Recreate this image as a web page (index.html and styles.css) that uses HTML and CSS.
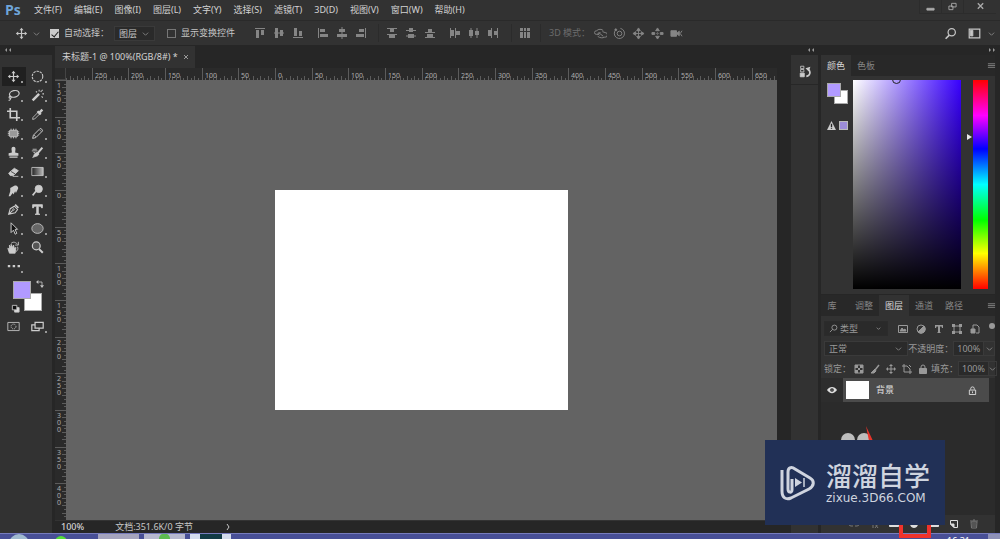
FILE: index.html
```html
<!DOCTYPE html>
<html lang="zh-CN">
<head>
<meta charset="utf-8">
<title>未标题-1</title>
<link rel="stylesheet" href="styles.css">
</head>
<body>
<div class="app">
  <header class="menubar">
    <span class="brand">Ps</span>
    <nav class="menus">
      <button>文件(F)</button><button>编辑(E)</button><button>图像(I)</button><button>图层(L)</button><button>文字(Y)</button><button>选择(S)</button><button>滤镜(T)</button><button>3D(D)</button><button>视图(V)</button><button>窗口(W)</button><button>帮助(H)</button>
    </nav>
    <div class="window-buttons">
      <button aria-label="最小化"><svg viewBox="0 0 10 10"><path d="M1 7h8v2H1z" fill="currentColor"/></svg></button>
      <button aria-label="还原"><svg viewBox="0 0 10 10"><path d="M4 1.5h5v4H4zM1 4.5h4.5v4H1z"/></svg></button>
      <button aria-label="关闭"><svg viewBox="0 0 10 10"><path d="M2 1.5l6 6M8 1.5l-6 6" stroke-width="1.5"/></svg></button>
    </div>
  </header>

  <div class="options">
    <button class="current-tool" aria-label="移动工具"><svg class="icon" viewBox="0 0 16 16"><path d="M8 3v10M3 8h10" stroke-width="1.5"/><path d="M8 1L5.500 4h5zM8 15l-2.500-3h5zM1 8l3-2.500v5zM15 8l-3-2.500v5z" fill="currentColor" stroke="none"/></svg><svg class="chev" viewBox="0 0 8 8"><path d="M1 3l3 3 3-3"/></svg></button>
    <label class="check"><input type="checkbox" checked>自动选择：</label>
    <label class="drop target"><select aria-label="自动选择目标"><option>图层</option></select><svg class="chev" viewBox="0 0 8 8"><path d="M1 3l3 3 3-3"/></svg></label>
    <label class="check second"><input type="checkbox">显示变换控件</label>
    <div class="align-group first">
      <button aria-label="顶对齐"><svg viewBox="0 0 12 12"><path d="M1 1h10v1H1zM2 3h3v8H2zM7 3h3v5H7z"/></svg></button>
      <button aria-label="垂直居中对齐"><svg viewBox="0 0 12 12"><path d="M2 1h3v10H2zM7 3h3v6H7zM1 5.500h10v1H1z"/></svg></button>
      <button aria-label="底对齐"><svg viewBox="0 0 12 12"><path d="M1 10h10v1H1zM2 1h3v8H2zM7 4h3v5H7z"/></svg></button>
    </div>
    <div class="align-group">
      <button aria-label="左对齐"><svg viewBox="0 0 12 12"><path d="M1 1h1v10H1zM3 2h5v3H3zM3 7h8v3H3z"/></svg></button>
      <button aria-label="水平居中对齐"><svg viewBox="0 0 12 12"><path d="M5.500 0h1v12h-1zM3 2h6v3H3zM1 7h10v3H1z"/></svg></button>
      <button aria-label="右对齐"><svg viewBox="0 0 12 12"><path d="M10 1h1v10h-1zM4 2h5v3H4zM1 7h8v3H1z"/></svg></button>
    </div>
    <div class="align-group ruled">
      <button aria-label="按顶分布"><svg viewBox="0 0 12 12"><path d="M1 1h10v1H1zM4 2h4v3H4zM1 7h10v1H1zM3 8h6v3H3z"/></svg></button>
      <button aria-label="垂直居中分布"><svg viewBox="0 0 12 12"><path d="M4 1h4v4H4zM1 3h10v1H1zM3 7h6v4H3zM1 8.500h10v1H1z"/></svg></button>
      <button aria-label="按底分布"><svg viewBox="0 0 12 12"><path d="M4 2h4v3H4zM1 5h10v1H1zM3 7h6v3H3zM1 10h10v1H1z"/></svg></button>
    </div>
    <div class="align-group">
      <button aria-label="按左分布"><svg viewBox="0 0 12 12"><path d="M1 1h1v10H1zM2 3h3v6H2zM6 1h1v10H6zM7 4h4v4H7z"/></svg></button>
      <button aria-label="水平居中分布"><svg viewBox="0 0 12 12"><path d="M1 3h4v6H1zM2.500 1h1v10h-1zM7 4h4v4H7zM8.500 1h1v10h-1z"/></svg></button>
      <button aria-label="按右分布"><svg viewBox="0 0 12 12"><path d="M4 1h1v10H4zM1 3h3v6H1zM10 1h1v10h-1zM7 4h3v4H7z"/></svg></button>
    </div>
    <div class="align-group ruled single">
      <button aria-label="自动对齐图层"><svg viewBox="0 0 12 12"><path d="M1 1h3v3H1zM5 1h2v3H5zM8 1h3v3H8zM1 5h3v6H1zM5 5h2v6H5zM8 5h3v6H8z"/></svg></button>
    </div>
    <div class="mode3d">
      <span class="mode-label">3D 模式：</span>
      <button aria-label="旋转 3D"><svg class="line" viewBox="0 0 14 14"><path d="M5 8H3a2.500 2 0 0 1 0-4c1-2 6-2 7 0M4 10c2 2 6 2 7 1h1a2 2 0 0 0 0-5L9 5M5 6l5 4M6 9L4 7l3-1"/></svg></button>
      <button aria-label="滚动 3D"><svg class="line" viewBox="0 0 14 14"><circle cx="7" cy="7" r="2.500"/><path d="M3 3a5.500 5.500 0 1 0 5-1.500"/><circle cx="3" cy="3" r="1" fill="currentColor"/></svg></button>
      <button aria-label="拖动 3D"><svg class="line" viewBox="0 0 14 14"><path d="M7 1l2 3H5zM7 13l2-3H5zM1 7l3-2v4zM13 7l-3-2v4z" fill="currentColor"/><path d="M7 3v8M3 7h8"/></svg></button>
      <button aria-label="滑动 3D"><svg class="line" viewBox="0 0 14 14"><path d="M7 1l2 3H5zM7 13l2-3H5zM1 6h3v2H1zM10 6h3v2h-3z" fill="currentColor"/><circle cx="7" cy="7" r=".8"/></svg></button>
      <button aria-label="缩放 3D"><svg class="line" viewBox="0 0 14 14"><path d="M1 4h6v6H1zM7 7l3-2.500v5z" fill="currentColor"/><path d="M13 4l-2 3 2 3"/></svg></button>
    </div>
    <div class="options-end">
      <button aria-label="搜索"><svg class="icon" viewBox="0 0 16 16"><circle cx="9.500" cy="6.500" r="4.500" stroke-width="1.500"/><path d="M6.500 10L2 14.500" stroke-width="2"/></svg></button>
      <button class="workspace" aria-label="工作区"><svg class="icon" viewBox="0 0 16 16"><path d="M1.500 2.500h13v11h-13z" stroke-width="1.5"/><path d="M3 4h3v7H3z" fill="currentColor"/></svg><svg class="chev" viewBox="0 0 8 8"><path d="M1 3l3 3 3-3"/></svg></button>
    </div>
  </div>

  <main class="workspace-area">
    <aside class="toolbar">
      <div class="dock-head"><svg viewBox="0 0 8 6"><path d="M3 1v4L1 3zM7 1v4L5 3z"/></svg></div>
      <div class="tools">
        <button class="sel" aria-label="移动"><svg class="icon" viewBox="0 0 16 16"><path d="M8 3v10M3 8h10" stroke-width="1.5"/><path d="M8 1L5.500 4h5zM8 15l-2.500-3h5zM1 8l3-2.500v5zM15 8l-3-2.500v5z" fill="currentColor" stroke="none"/></svg></button>
        <button aria-label="椭圆选框"><svg class="icon" viewBox="0 0 16 16"><circle cx="8" cy="8" r="6.500" stroke-width="1.300" stroke-dasharray="3 1.080"/></svg></button>
        <button aria-label="套索"><svg class="icon" viewBox="0 0 16 16"><ellipse cx="9" cy="6" rx="6" ry="4" stroke-width="1.500" transform="rotate(-12 9 6)"/><path d="M4 9c-2 0-2 2.500 0 2.500S5 8.500 3.500 9M4 11c1 2-1 3-2 3" stroke-width="1.300"/></svg></button>
        <button aria-label="魔棒"><svg class="icon" viewBox="0 0 16 16"><path d="M2 14l8-8" stroke-width="3"/><path d="M10 1v2M14 6h2M13 2l-1 1.500M6 3l1.500 1M13 9l1.500 1.500M14 1v1" stroke-width="1.300"/></svg></button>
        <button aria-label="裁剪"><svg class="icon" viewBox="0 0 16 16"><path d="M4 0v12h12M0 4h12v12" stroke-width="2"/></svg></button>
        <button aria-label="吸管"><svg class="icon" viewBox="0 0 16 16"><path d="M9 5l2 2-6.500 6.500L2 14l.5-2.500z"/><path d="M8 4l4 4M11 5l3-3" stroke-width="3"/></svg></button>
        <button aria-label="修补"><svg class="icon" viewBox="0 0 16 16"><rect x="3" y="4" width="10" height="8" rx="1" fill="#999"/><path d="M5 2v2M8 2v2M11 2v2M5 12v2M8 12v2M11 12v2M1 6h2M1 8h2M1 10h2M13 6h2M13 8h2M13 10h2"/></svg></button>
        <button aria-label="铅笔"><svg class="icon" viewBox="0 0 16 16"><path d="M2 14l1-4 8-8c1-1 4 2 3 3l-8 8zM4 10l2 2M11 4l1.500 1.500" stroke-width="1.200"/></svg></button>
        <button aria-label="图章"><svg class="icon" viewBox="0 0 16 16"><path d="M6 8L5.500 3.500a2.500 2.500 0 0 1 5 0L10 8l4 1v3H2V9zM3 13h10v1.500H3z" fill="currentColor" stroke="none"/></svg></button>
        <button aria-label="历史记录画笔"><svg class="icon" viewBox="0 0 16 16"><path d="M14 2L8 9" stroke-width="2.500"/><path d="M8 8c2 1 2 3 0 4s-4 1-6 2c2-1 1-6 6-6z" fill="currentColor"/><path d="M1 6h7M2 4h5M3 8h2"/></svg></button>
        <button aria-label="橡皮擦"><svg class="icon" viewBox="0 0 16 16"><path d="M2 10l7-6 5 3-6 6H4z" fill="currentColor"/><path d="M5 8l5 3" stroke="#333"/><path d="M7 14h7"/></svg></button>
        <button aria-label="渐变"><svg class="icon" viewBox="0 0 16 16"><defs><linearGradient id="fade"><stop stop-color="#222"/><stop offset="1" stop-color="#bbb"/></linearGradient></defs><path d="M1 3h14v10H1z" fill="url(#fade)"/></svg></button>
        <button aria-label="涂抹"><svg class="icon" viewBox="0 0 16 16"><path d="M2 15l2-6 0-4 5-3c4-1 6 3 4 5l-2 4-1-2-2 4-1-2-3 4z" fill="currentColor" stroke="none"/></svg></button>
        <button aria-label="减淡"><svg class="icon" viewBox="0 0 16 16"><circle cx="9.500" cy="6" r="4.500" fill="currentColor"/><path d="M6 9l-4 5" stroke-width="2"/></svg></button>
        <button aria-label="钢笔"><svg class="icon" viewBox="0 0 16 16"><path d="M2 14l2-7 5-3 4 4-3 4zM2 14l5-5" stroke-width="1.300"/><circle cx="8" cy="8" r="1"/><path d="M10 2l4 4" stroke-width="2"/></svg></button>
        <button aria-label="横排文字"><svg class="icon" viewBox="0 0 16 16"><path d="M2 2h12v4h-1l-1-2H9v9l2 1H5l2-1V4H4L3 6H2z" fill="currentColor"/></svg></button>
        <button aria-label="路径选择"><svg class="icon" viewBox="0 0 16 16"><path d="M5 1v12l3-3 2 5 2-1-2-5h3z" fill="#111" stroke-width="1.200"/></svg></button>
        <button aria-label="椭圆"><svg class="icon" viewBox="0 0 16 16"><ellipse cx="8" cy="8" rx="7" ry="6" fill="#666"/></svg></button>
        <button aria-label="旋转视图"><svg class="icon" viewBox="0 0 16 16"><path d="M3 15L1 9l2 1V5l2 3V4l2 4 1-3 1 4 2-1-1 7z" fill="currentColor"/><path d="M5 3c3-3 6-1 8 1M14 1v4h-4M13 7c1 3 0 5-2 6"/></svg></button>
        <button class="plain" aria-label="缩放"><svg class="icon" viewBox="0 0 16 16"><circle cx="6.500" cy="6" r="4.800" fill="#555" stroke-width="1.500"/><path d="M10 10l4.500 4.500" stroke-width="2.500"/></svg></button>
        <button aria-label="更多工具"><svg class="icon" viewBox="0 0 16 16"><path d="M1 6h3v3H1zM7 6h3v3H7zM13 6h3v3h-3z" fill="currentColor" stroke="none"/></svg></button>
      </div>
      <div class="swatches">
        <button class="swatch back" aria-label="背景色"></button>
        <button class="swatch fore" aria-label="前景色"></button>
        <svg class="swap" viewBox="0 0 10 10"><path d="M3 2.500h4.500V7"/><path d="M3 0v5L0 2.500zM5 6.500h5L7.500 10z" fill="currentColor" stroke="none"/></svg>
        <svg class="reset" viewBox="0 0 10 10"><path d="M4 4h5v5H4z" fill="#ddd"/><path d="M1.500 1.500h5v5h-5z" fill="#111"/></svg>
      </div>
      <div class="tools modes">
        <button class="plain" aria-label="快速蒙版"><svg class="icon" viewBox="0 0 16 16"><path d="M1 3h14v10H1z"/><circle cx="8" cy="8" r="3" stroke-dasharray="1.500 1"/></svg></button>
        <button aria-label="屏幕模式"><svg class="icon" viewBox="0 0 16 16"><path d="M5 6H1v7h9v-3M5 3h10v7H5z" stroke-width="1.5"/></svg></button>
      </div>
    </aside>

    <section class="document">
      <div class="doc-tabs"><div class="doc-tab"><span>未标题-1 @ 100%(RGB/8#) *</span><button aria-label="关闭文档"><svg viewBox="0 0 8 8"><path d="M2 2l4 4M6 2L2 6"/></svg></button></div></div>
      <div class="doc-grid">
        <div class="ruler-corner"></div>
        <svg class="ruler ruler-h" data-axis="x"></svg>
        <svg class="ruler ruler-v" data-axis="y"></svg>
        <div class="stage"><div class="artboard"></div></div>
      </div>
      <footer class="status"><b>100%</b><span>文档:351.6K/0 字节</span><button aria-label="状态选项"><svg viewBox="0 0 8 8"><path d="M3 1l2 3-2 3"/></svg></button></footer>
    </section>

    <aside class="strip">
      <div class="dock-head"><svg viewBox="0 0 8 6"><path d="M3 1v4L1 3zM7 1v4L5 3z"/></svg></div>
      <div class="strip-body">
        <button aria-label="历史记录"><svg class="icon" viewBox="0 0 16 16"><path d="M2 1.500h4v3H2zM2 5.500h4v3H2z"/><path d="M1.500 10h5v4.500h-5z" fill="currentColor"/><path d="M9 14c5-1 6-6 2-9" stroke-width="2"/><path d="M8 4l6-2-2 6z" fill="currentColor" stroke="none"/></svg></button>
      </div>
    </aside>

    <aside class="panels">
      <div class="dock-head end"><svg viewBox="0 0 8 6"><path d="M1 1v4l2-2zM5 1v4l2-2z"/></svg></div>
      <section class="panel">
        <div class="tabs"><button class="active">颜色</button><button>色板</button><button class="panel-menu" aria-label="面板菜单"><svg viewBox="0 0 10 8"><path d="M1 1.500h8M1 3.500h8M1 5.500h8"/></svg></button></div>
        <div class="color-body">
          <div class="color-side">
            <div class="color-pair"><button class="swatch back" aria-label="背景色"></button><button class="swatch fore" aria-label="前景色"></button></div>
            <div class="gamut"><svg viewBox="0 0 10 10"><path d="M5 0l5 10H0z" fill="#ccc"/><path d="M5 3v4M5 8v1" stroke="#222" stroke-width="1.5"/></svg><i></i></div>
          </div>
          <div class="field"><span class="field-mark"></span></div>
          <div class="hue"><span class="hue-mark"></span></div>
        </div>
      </section>
      <section class="panel layers">
        <div class="tabs"><button class="short">库</button><button>调整</button><button class="active">图层</button><button>通道</button><button>路径</button><button class="panel-menu" aria-label="面板菜单"><svg viewBox="0 0 10 8"><path d="M1 1.500h8M1 3.500h8M1 5.500h8"/></svg></button></div>
        <div class="layer-controls">
          <div class="row filter">
            <label class="drop kind"><svg class="search" viewBox="0 0 10 10"><circle cx="6" cy="4" r="2.800"/><path d="M4 6L1 9"/></svg><select aria-label="筛选类型"><option>类型</option></select><svg class="chev" viewBox="0 0 8 8"><path d="M2 3l2 2 2-2"/></svg></label>
            <div class="filter-icons">
              <button aria-label="像素图层"><svg viewBox="0 0 10 10"><path d="M.5 1.500h9v7h-9z"/><path d="M2 7l2-3 1.500 2L7 5l1 2z" fill="currentColor"/></svg></button>
              <button aria-label="调整图层"><svg viewBox="0 0 10 10"><circle cx="5" cy="5" r="4"/><path d="M8 2a4 4 0 0 1-6 6z" fill="currentColor"/></svg></button>
              <button aria-label="文字图层"><svg viewBox="0 0 10 10"><path d="M1 1h8v3H8L7.500 2.500H6V8l1 1H3l1-1V2.500H2.500L2 4H1z" fill="currentColor" stroke="none"/></svg></button>
              <button aria-label="形状图层"><svg viewBox="0 0 10 10"><path d="M2 2h6v6H2z"/><path d="M0 0h3v3H0zM7 0h3v3H7zM0 7h3v3H0zM7 7h3v3H7z" fill="currentColor" stroke="none"/></svg></button>
              <button aria-label="智能对象"><svg viewBox="0 0 10 10"><path d="M3 5V1h4l2 2v6H6"/><path d="M1 5h4v4H1z" fill="currentColor"/></svg></button>
            </div>
            <i class="filter-switch"></i>
          </div>
          <div class="row">
            <label class="drop blend"><select aria-label="混合模式"><option>正常</option></select><svg class="chev" viewBox="0 0 8 8"><path d="M1 3l3 3 3-3"/></svg></label>
            <label class="value">不透明度：<input type="text" value="100%"></label><button class="more" aria-label="不透明度滑块"><svg class="chev" viewBox="0 0 8 8"><path d="M1 3l3 3 3-3"/></svg></button>
          </div>
          <div class="row">
            <span class="lock-label">锁定：</span>
            <div class="lock-icons">
              <button aria-label="锁定透明像素"><svg viewBox="0 0 10 10"><path d="M1 1h8v8H1z"/><path d="M1 1h3v3H1zM6 1h3v3H6zM4 4h2v2H4zM1 6h3v3H1zM6 6h3v3H6z" fill="currentColor" stroke="none"/></svg></button>
              <button aria-label="锁定图像像素"><svg viewBox="0 0 10 10"><path d="M9 1L5 6" stroke-width="1.5"/><path d="M5 5l1 2-2 2H1l2-2z" fill="currentColor"/></svg></button>
              <button aria-label="锁定位置"><svg viewBox="0 0 10 10"><path d="M5 1v8M1 5h8"/><path d="M5 0l2 2H3zM5 10l2-2H3zM0 5l2-2v4zM10 5L8 3v4z" fill="currentColor" stroke="none"/></svg></button>
              <button aria-label="锁定画板"><svg viewBox="0 0 10 10"><path d="M2 0v8h8M0 2h5l3 3v5M7 1l2 2"/></svg></button>
              <button aria-label="全部锁定"><svg viewBox="0 0 10 10"><path d="M1.500 4.500h7v5h-7z" fill="currentColor"/><path d="M3 4V3a2 2 0 0 1 4 0v1"/></svg></button>
            </div>
            <label class="value">填充：<input type="text" value="100%"></label><button class="more" aria-label="填充滑块"><svg class="chev" viewBox="0 0 8 8"><path d="M1 3l3 3 3-3"/></svg></button>
          </div>
        </div>
        <div class="layer-list">
          <div class="layer">
            <button class="eye" aria-label="可见性"><svg viewBox="0 0 12 8"><path d="M0 4c3-5 9-5 12 0-3 5-9 5-12 0z" fill="#ddd"/><circle cx="6" cy="4" r="2.200" fill="#222"/><circle cx="6" cy="4" r=".7" fill="#ddd"/></svg></button>
            <div class="layer-main"><i class="thumb"></i><span>背景</span><svg class="lock" viewBox="0 0 10 10"><path d="M1.500 4.500h7v5h-7zM3 4V3a2 2 0 0 1 4 0v1M5 6v2"/></svg></div>
          </div>
        </div>
        <div class="layer-foot">
          <button class="dim" aria-label="链接图层"><svg viewBox="0 0 10 10"><path d="M4 3H2a2 2 0 0 0 0 4h2M6 3h2a2 2 0 0 1 0 4H6M3 5h4"/></svg></button>
          <button class="dim" aria-label="图层样式"><svg viewBox="0 0 10 10"><path d="M4 9V2h2M2 5h4M6 5l3 4M9 5L6 9"/></svg></button>
          <button aria-label="图层蒙版"><svg viewBox="0 0 10 10"><path d="M.5 1.500h9v6h-9z" fill="currentColor"/></svg></button>
          <button aria-label="新建调整图层"><svg viewBox="0 0 10 10"><circle cx="5" cy="5" r="3.500" fill="currentColor"/></svg></button>
          <button aria-label="新建组"><svg viewBox="0 0 10 10"><path d="M.5 1.500h3l1 1h5v5h-9z" fill="currentColor"/></svg></button>
          <button aria-label="新建图层"><svg viewBox="0 0 10 10"><path d="M1.500 1.500h7v7H5L1.500 5z"/><path d="M1.500 5H5v3.500z" fill="currentColor"/></svg></button>
          <button class="dim" aria-label="删除图层"><svg viewBox="0 0 10 10"><path d="M1 2h8M4 1h2M2 3l.5 6h5L8 3zM4 4v4M6 4v4"/></svg></button>
        </div>
      </section>
    </aside>
  </main>
  <footer class="taskbar"><i class="orb"></i><i class="spot"></i><div class="tasks"><i class="a"></i><i class="b"></i><i class="c"></i></div><span class="clock">16:31</span><i class="desktop"></i></footer>

  <svg class="doodle" viewBox="0 0 40 24"><circle cx="10" cy="15" r="7" fill="#bdbdbd"/><circle cx="26" cy="15" r="7" fill="#bdbdbd"/><path d="M28 1l7 15h-4z" fill="#e8342a"/></svg>
  <div class="callout"></div>
  <div class="watermark">
    <svg viewBox="0 0 36 38"><path d="M2 6v21c0 7 4 9 9 7l18-9c5-3 6-8 1-11L15 5c-4-3-7-1-7 3v17c0 4 4 4 4 1V15" stroke-width="3"/><path d="M15 14l7 4.500-7 4.500z" fill="currentColor" stroke="none"/><path d="M24 14v9" stroke-width="1.5"/></svg>
    <div class="watermark-text"><strong>溜溜自学</strong><span>zixue.3D66.COM</span></div>
  </div>
</div>
<script src="script.js"></script>
</body>
</html>
```

FILE: styles.css
```css
* { box-sizing: border-box; }
body { margin: 0; background: #262626; color: #c6c6c6; font: 9px/14px "Noto Sans", "Noto Sans CJK SC", sans-serif; }
button, input, select { font: inherit; color: inherit; background: none; border: 0; padding: 0; margin: 0; border-radius: 0; outline: 0; }
button { display: flex; align-items: center; justify-content: center; white-space: nowrap; }
svg { display: block; flex: none; fill: none; stroke: currentColor; }
i { display: block; }

.app { position: relative; display: flex; flex-direction: column; height: 100vh; overflow: hidden; }
.icon { width: 13px; height: 13px; }
.chev { width: 7px; height: 7px; color: #888; }

.menubar { display: flex; align-items: center; flex: none; height: 21px; background: #323232; border-bottom: 1px solid #2a2a2a; }
.brand { width: 29px; padding-left: 5px; color: #6fa5da; font: bold 14px/18px "Open Sans", sans-serif; }
.menus { display: flex; flex: 1; gap: 12px; padding-left: 5px; color: #d2d2d2; }
.window-buttons { display: flex; padding-right: 4px; align-self: flex-start; }
.window-buttons button { width: 22px; height: 14px; border: solid #2c2c2c; border-width: 0 0 1px 1px; color: #aaa; }
.window-buttons button:last-child { width: 33px; }
.window-buttons svg { width: 9px; height: 9px; }

.options { display: flex; align-items: center; flex: none; height: 24px; background: #323232; padding: 0 5px 0 15px; white-space: nowrap; }
.current-tool { gap: 5px; width: 35px; justify-content: flex-start; }
.check { display: flex; align-items: center; gap: 5px; width: 64px; }
.check.second { width: 80px; margin-left: 12px; }
.check input { appearance: none; width: 9px; height: 9px; border: 1px solid #777; }
.check input:checked { background: #ccc; border-color: #ccc; display: grid; place-items: center; }
.check input:checked::after { content: ""; width: 3px; height: 6px; border: solid #222; border-width: 0 1px 1px 0; transform: rotate(40deg); }
.drop { display: grid; grid-template-columns: 1fr 12px; align-items: center; background: #2a2a2a; border: 1px solid #3a3a3a; height: 15px; }
.drop select { appearance: none; grid-area: 1 / 1 / 2 / 3; width: 100%; padding-left: 4px; height: 13px; line-height: 13px; }
.drop .chev { grid-area: 1 / 2; pointer-events: none; }
.drop option { background: #2a2a2a; }
.target { width: 41px; }
.align-group, .mode3d { display: flex; color: #858585; padding: 0 3px; }
.align-group button, .mode3d button { width: 19px; height: 18px; }
.align-group svg { width: 12px; height: 12px; fill: currentColor; stroke: none; }
.align-group.ruled { border-left: 1px solid #2b2b2b; margin-left: 5px; }
.align-group.single { margin-left: 6px; }
.single + .mode3d { border-left: 1px solid #2b2b2b; margin-left: 3px; padding-left: 8px; }
.mode3d .line { width: 13px; height: 13px; }
.mode-label { width: 42px; color: #6c6c6c; line-height: 18px; }
.options-end { display: flex; gap: 11px; margin-left: auto; }
.workspace { gap: 7px; }

.workspace-area { display: flex; flex: 1; min-height: 0; gap: 3px; }
.dock-head { flex: none; height: 10px; padding: 2px 4px; color: #999; background: #262626; }
.dock-head svg { width: 8px; height: 6px; fill: currentColor; stroke: none; }
.toolbar { width: 52px; background: #323232; }
.tools { display: grid; grid-template-columns: 24px 24px; grid-auto-rows: 19px; padding: 12px 0 0 2px; }
.tools button { position: relative; color: #ccc; }
.tools .icon { margin-right: 1px; }
.tools .sel { background: #202020; }
.tools button:not(.plain)::after { content: ""; position: absolute; right: 3px; bottom: 3px; width: 2px; height: 2px; background: #999; }
.swatches { position: relative; height: 38px; }
.swatch { position: absolute; border: 1px solid #aaa; }
.swatches .swatch { width: 18px; height: 18px; }
.fore { background: #b19aff; }
.back { background: #fff; }
.swatches .fore { left: 13px; top: 5px; }
.swatches .back { left: 24px; top: 17px; }
.swap { position: absolute; left: 36px; top: 4px; width: 8px; height: 8px; }
.reset { position: absolute; left: 11px; top: 28px; width: 9px; height: 9px; }
.modes { padding-top: 3px; }

.document { display: flex; flex-direction: column; flex: 1; min-width: 0; }
.doc-tabs { display: flex; flex: none; height: 22px; background: #262626; margin-top: 1px; }
.doc-tab { display: flex; align-items: center; gap: 4px; padding: 0 5px 0 7px; background: #323232; color: #d2d2d2; white-space: pre; }
.doc-tab svg { width: 8px; height: 8px; color: #999; }
.doc-grid { display: grid; grid-template: 12px 1fr / 11px 1fr; flex: 1; min-height: 0; }
.ruler-corner { background: #2a2a2a; border: solid #444; border-width: 0 1px 1px 0; }
.ruler { width: 100%; height: 100%; min-height: 0; background: #2a2a2a; shape-rendering: crispEdges; overflow: hidden; }
.ruler path { stroke: #5c5c5c; }
.ruler text { fill: #adadad; stroke: none; font-size: 7px; }
.stage { display: flex; align-items: center; justify-content: center; min-height: 0; background: #636363; overflow: hidden; }
.artboard { width: 293px; height: 220px; background: #fff; }
.status { display: flex; align-items: center; flex: none; height: 13px; gap: 31px; padding-left: 6px; background: #262626; border-top: 1px solid #333; line-height: 12px; }
.status b { color: #d4d4d4; font-weight: 500; }
.status svg { width: 8px; height: 8px; }

.strip { display: flex; flex-direction: column; width: 27px; margin-left: 11px; background: #323232; }
.strip .dock-head { padding-left: 16px; }
.strip-body { display: flex; justify-content: center; height: 30px; padding: 4px 0 0 2px; border-bottom: 1px solid #272727; color: #ccc; }

.panels { display: flex; flex-direction: column; width: 179px; }
.dock-head.end { display: flex; justify-content: flex-end; padding-right: 4px; }
.panel { background: #323232; margin-right: 5px; }
.tabs { display: flex; height: 21px; background: #282828; color: #858585; }
.tabs button { width: 30px; }
.tabs .short { width: 28px; padding-right: 6px; }
.tabs .active { background: #323232; color: #d8d8d8; }
.tabs .panel-menu { width: 10px; margin: 0 -1px 0 auto; }
.panel-menu svg { width: 9px; height: 8px; }
.color-body { display: flex; height: 218px; padding: 4px 7px 5px 6px; }
.color-side { width: 26px; }
.color-pair { position: relative; height: 41px; }
.color-pair .swatch { width: 14px; height: 14px; }
.color-pair .fore { top: 3px; left: 0; }
.color-pair .back { top: 10px; left: 7px; }
.gamut { display: flex; gap: 3px; align-items: center; }
.gamut svg { width: 9px; height: 9px; stroke: none; }
.gamut i { width: 9px; height: 9px; background: #9c8cd8; border: 1px solid #bbb; }
.field { position: relative; flex: 1; background: linear-gradient(transparent, #000), linear-gradient(90deg, #fff, #3800ff); overflow: hidden; }
.field-mark { position: absolute; top: -5px; left: 36%; width: 9px; height: 9px; border: 1px solid #222; border-radius: 50%; }
.hue { position: relative; width: 15px; margin-left: 12px; background: linear-gradient(#f00, #f0f 17%, #00f 33%, #0ff 50%, #0f0 67%, #ff0 83%, #f00); }
.hue-mark { position: absolute; top: 26%; left: -6px; border: 3px solid transparent; border-left: 5px solid #e8e8e8; border-right: 0; }

.layers { display: flex; flex-direction: column; flex: 1; min-height: 0; margin-top: 1px; }
.layer-controls { display: flex; flex-direction: column; gap: 5px; padding: 5px 0 2px 3px; color: #999; }
.row { display: flex; align-items: center; height: 15px; white-space: nowrap; }
.kind { width: 64px; border-color: #2b2b2b; }
.kind .search { grid-area: 1 / 1; width: 9px; height: 9px; margin-left: 4px; pointer-events: none; }
.kind select { padding-left: 15px; }
.filter-icons { display: flex; padding-left: 6px; }
.filter-icons button { width: 18px; height: 15px; }
.filter-icons svg, .lock-icons svg { width: 10px; height: 10px; }
.filter-switch { width: 6px; height: 6px; margin: 0 0 6px auto; border-radius: 50%; background: #999; }
.blend { width: 87px; }
.value { display: flex; align-items: center; margin-left: auto; }
.value input { width: 31px; height: 15px; padding-left: 3px; background: #2a2a2a; border: 1px solid #3a3a3a; }
.more { width: 12px; height: 15px; border: 1px solid #3a3a3a; margin-left: -1px; }
.lock-label { width: 28px; }
.lock-icons { display: flex; }
.lock-icons button { width: 16px; height: 15px; }
.layer-list { flex: 1; min-height: 0; background: #2b2b2b; }
.layer { display: flex; height: 24px; margin-right: 6px; }
.eye { width: 22px; background: #2d2d2d; }
.eye svg { width: 10px; height: 8px; stroke: none; }
.layer-main { display: flex; flex: 1; align-items: center; gap: 7px; padding: 0 12px 0 3px; background: #4b4b4b; color: #e0e0e0; }
.thumb { width: 23px; height: 18px; background: #fff; }
.lock { width: 9px; height: 9px; margin-left: auto; }
.layer-foot { display: flex; justify-content: flex-end; height: 18px; padding-right: 11px; background: #323232; color: #ddd; }
.layer-foot button { width: 20px; }
.layer-foot svg { width: 10px; height: 10px; }
.layer-foot .dim { color: #777; }

.taskbar { display: flex; flex: none; height: 6px; background: #484f96; border-top: 1px solid #777cbd; overflow: hidden; }
.orb { width: 20px; height: 20px; margin-left: 9px; border-radius: 50%; background: #a0bad0; }
.spot { width: 12px; height: 12px; margin: 2px 31px 0 26px; border-radius: 50%; background: #55df38; }
.tasks { display: flex; gap: 5px; }
.tasks i { width: 41px; height: 6px; background: #a5a4bd; }
.tasks .b { background: radial-gradient(circle at 50% 80%, #5dbb51 5px, #b7b9cf 6px); }
.tasks .c { background: linear-gradient(90deg, #d4dced 10px, #123b45 10px, #123b45 32px, #d4dced 32px); }
.clock { margin-left: auto; color: #fff; line-height: 13px; }
.desktop { width: 12px; margin-left: 18px; background: #8e91b8; }

.doodle { position: absolute; right: 122px; bottom: 90px; width: 40px; height: 24px; stroke: none; }
.callout { position: absolute; right: 69px; bottom: 1px; width: 32px; height: 18px; border: 4px solid #f0322b; }
.watermark { position: absolute; right: 55px; bottom: 14px; display: flex; align-items: center; gap: 10px; width: 180px; height: 85px; padding-left: 15px; background: #213056; color: #cfd4df; }
.watermark svg { width: 36px; height: 38px; }
.watermark-text { display: flex; flex-direction: column; gap: 2px; }
.watermark strong, .watermark span { white-space: nowrap; }
.watermark strong { font-size: 26px; line-height: 28px; font-weight: 500; }
.watermark span { font-family: "DejaVu Sans", sans-serif; font-size: 12px; line-height: 12px; }
```

FILE: script.js
```js
const NS = "http://www.w3.org/2000/svg";
const STEP = 110 / 3;

function drawRuler(svg, origin, thickness, length) {
  const horizontal = svg.dataset.axis === "x";
  const first = -Math.ceil(origin / STEP);
  const last = Math.ceil((length - origin) / STEP);
  let d = "";
  for (let i = first; i <= last; i++) {
    const start = origin + i * STEP;
    for (let n = 0; n < 10; n++) {
      const p = Math.round(start + n * STEP / 10) + 0.5;
      const size = n === 0 ? thickness : n % 2 ? 2 : 4;
      d += horizontal ? `M${p} ${thickness}v${-size}` : `M${thickness} ${p}h${-size}`;
    }
    if (start < 0 || start > length - 24) continue;
    const digits = String(Math.abs(i * 50));
    (horizontal ? [digits] : [...digits]).forEach((part, k) => {
      const text = document.createElementNS(NS, "text");
      text.setAttribute("x", horizontal ? Math.round(start) + 3 : 2);
      text.setAttribute("y", horizontal ? 10 : Math.round(start) + 8 + k * 7);
      text.textContent = part;
      svg.append(text);
    });
  }
  const path = document.createElementNS(NS, "path");
  path.setAttribute("d", d);
  svg.prepend(path);
}

const stage = document.querySelector(".stage").getBoundingClientRect();
const board = document.querySelector(".artboard").getBoundingClientRect();
drawRuler(document.querySelector(".ruler-h"), board.left - stage.left, 12, stage.width);
drawRuler(document.querySelector(".ruler-v"), board.top - stage.top, 11, stage.height);
```
